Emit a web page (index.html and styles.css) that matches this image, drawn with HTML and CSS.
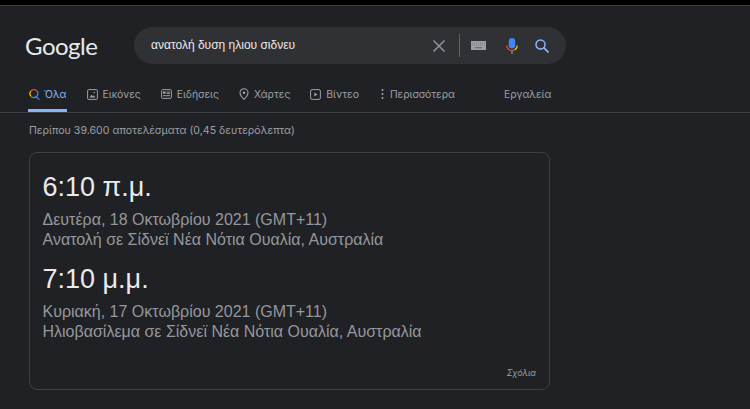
FILE: index.html
```html
<!DOCTYPE html>
<html lang="el">
<head>
<meta charset="utf-8">
<title>ανατολή δυση ηλιου σιδνευ</title>
<link rel="stylesheet" href="styles.css">
</head>
<body>
<div class="top-strip"></div>
<header class="header">
  <div class="logo">Google</div>
  <div class="search">
    <span class="query">ανατολή δυση ηλιου σιδνευ</span>
    <svg class="clear" width="14" height="14" viewBox="0 0 14 14"><path d="M1.500 1.500l11 11M12.500 1.500l-11 11" stroke="#8e9196" stroke-width="1.600" fill="none"/></svg>
    <span class="divider"></span>
    <svg class="kbd" width="15" height="9" viewBox="0 0 15 9"><rect width="15" height="9" fill="#9aa0a6"/><path d="M1 2h13M1 4h13" stroke="#6f7378" stroke-width=".7" stroke-dasharray="1 1"/><rect x="4" y="6" width="7" height="1.400" fill="#6f7378"/></svg>
    <svg class="mic" width="12" height="16" viewBox="0 0 12 16">
      <rect x="2.800" y="0" width="6.400" height="10.500" rx="3.200" fill="#4285f4"/>
      <path d="M.7 7.600a5.300 5.300 0 0 0 2.800 4.300" stroke="#ea4335" stroke-width="1.400" fill="none"/>
      <path d="M11.300 7.600a5.300 5.300 0 0 1-2.800 4.300" stroke="#fbbc05" stroke-width="1.400" fill="none"/>
      <path d="M3.500 11.900a5.300 5.300 0 0 0 5 0" stroke="#ea4335" stroke-width="1.400" fill="none"/>
      <rect x="5.200" y="12.500" width="1.600" height="3.500" fill="#34a853"/>
    </svg>
    <svg class="lens" width="14" height="14" viewBox="0 0 14 14"><circle cx="5.500" cy="5.500" r="4.500" stroke="#8ab4f8" stroke-width="1.500" fill="none"/><path d="M8.700 8.700L13.500 13.500" stroke="#8ab4f8" stroke-width="1.700"/></svg>
  </div>
</header>
<nav class="tabs">
  <a class="tab tab-active">
    <svg width="11" height="11" viewBox="0 0 12 12"><path d="M8.200 1.600A4.400 4.400 0 0 0 2 2.400" stroke="#ea4335" stroke-width="1.400" fill="none"/><path d="M2 2.400a4.400 4.400 0 0 0 .2 5.600" stroke="#fbbc05" stroke-width="1.400" fill="none"/><path d="M2.200 8a4.400 4.400 0 0 0 5.600 .6" stroke="#34a853" stroke-width="1.400" fill="none"/><path d="M8.200 1.600a4.400 4.400 0 0 1-.4 7L11.400 11.600" stroke="#4285f4" stroke-width="1.400" fill="none"/></svg>
    <span>Όλα</span>
  </a>
  <a class="tab">
    <svg width="11" height="11" viewBox="0 0 11 11"><rect x=".6" y=".6" width="9.800" height="9.800" rx="1" stroke="#9aa0a6" fill="none"/><path d="M2.400 8.400l2-2.600 1.400 1.500 1-1 1.600 2.100z" fill="#9aa0a6"/><circle cx="7.300" cy="3.500" r=".8" fill="#9aa0a6"/></svg>
    <span>Εικόνες</span>
  </a>
  <a class="tab">
    <svg width="11" height="10" viewBox="0 0 11 10"><rect x=".6" y=".6" width="9.800" height="8.800" rx="1" stroke="#9aa0a6" fill="none"/><rect x="2" y="2.400" width="2.600" height="2.400" fill="#9aa0a6"/><path d="M5.600 3h3.400M5.600 4.600h3.400M2 6.700h7" stroke="#9aa0a6"/></svg>
    <span>Ειδήσεις</span>
  </a>
  <a class="tab">
    <svg width="10" height="12" viewBox="0 0 10 12"><path d="M5 .7a4 4 0 0 0-4 4c0 2.800 4 6.600 4 6.600s4-3.800 4-6.600a4 4 0 0 0-4-4z" stroke="#9aa0a6" stroke-width="1.100" fill="none"/><circle cx="5" cy="4.700" r="1.300" fill="#9aa0a6"/></svg>
    <span>Χάρτες</span>
  </a>
  <a class="tab">
    <svg width="11" height="11" viewBox="0 0 11 11"><rect x=".6" y=".6" width="9.800" height="9.800" rx="1.500" stroke="#9aa0a6" fill="none"/><path d="M4.300 3.400v4.200l3.200-2.100z" fill="#9aa0a6"/></svg>
    <span>Βίντεο</span>
  </a>
  <a class="tab tab-more">
    <svg width="3" height="10" viewBox="0 0 3 10"><path d="M1.500 0v2M1.500 4v2M1.500 8v2" stroke="#9aa0a6" stroke-width="1.600"/></svg>
    <span>Περισσότερα</span>
  </a>
  <a class="tab tab-tools"><span>Εργαλεία</span></a>
</nav>
<main class="main">
  <p class="stats">Περίπου 39.600 αποτελέσματα (0,45 δευτερόλεπτα)</p>
  <section class="card">
    <div class="entry">
      <div class="time">6:10 π.μ.</div>
      <div class="detail">Δευτέρα, 18 Οκτωβρίου 2021 (GMT+11)</div>
      <div class="detail">Ανατολή σε Σίδνεϊ Νέα Νότια Ουαλία, Αυστραλία</div>
    </div>
    <div class="entry">
      <div class="time">7:10 μ.μ.</div>
      <div class="detail">Κυριακή, 17 Οκτωβρίου 2021 (GMT+11)</div>
      <div class="detail">Ηλιοβασίλεμα σε Σίδνεϊ Νέα Νότια Ουαλία, Αυστραλία</div>
    </div>
    <div class="feedback">Σχόλια</div>
  </section>
</main>
</body>
</html>
```
FILE: styles.css
```css
* { box-sizing: border-box; }
html, body { margin: 0; height: 100%; }
body {
  background: #202124;
  font-family: "Liberation Sans", Arial, sans-serif;
  color: #bdc1c6;
  overflow: hidden;
}
.top-strip {
  height: 6px;
  background: #000;
  border-bottom: 1px solid #3c4043;
}
.header {
  display: flex;
  align-items: center;
  height: 37px;
  margin-top: 21px;
  padding-left: 25px;
}
.logo {
  width: 109px;
  font-family: "Lato", sans-serif;
  font-size: 24px;
  line-height: 37px;
  letter-spacing: -0.5px;
  color: #e8eaed;
}
.search {
  display: flex;
  align-items: center;
  width: 432px;
  height: 37px;
  padding-left: 17px;
  border-radius: 19px;
  background: #303134;
}
.query {
  flex: 1;
  padding-bottom: 2px;
  font-size: 12px;
  color: #e8eaed;
}
.clear { margin-right: 13px; }
.divider {
  width: 1px;
  height: 23px;
  margin-right: 11px;
  background: #5f6368;
}
.kbd { margin-right: 20px; }
.mic { margin-right: 17px; }
.lens { margin-right: 17px; }
.tabs {
  display: flex;
  align-items: stretch;
  height: 49px;
  padding: 0 0 0 28px;
  border-bottom: 1px solid #3c4043;
}
.tab {
  display: flex;
  align-items: center;
  gap: 5px;
  height: 48px;
  padding-top: 12px;
  margin-right: 20px;
  font-family: "Inter", "Noto Sans", sans-serif;
  font-size: 10.400px;
  color: #9aa0a6;
}
.tab-active {
  gap: 4px;
  color: #8ab4f8;
  border-bottom: 3px solid #8ab4f8;
  padding-top: 15px;
  padding-left: 1px;
}
.tab-more { gap: 6px; margin-left: 2px; margin-right: 49px; }
.tab-tools { margin-right: 0; }
.main { padding: 0 0 0 29px; }
.stats {
  margin: 10px 0 0;
  font-family: "Inter", "Noto Sans", sans-serif;
  font-size: 10.600px;
  line-height: 16px;
  color: #9aa0a6;
}
.card {
  display: flex;
  flex-direction: column;
  width: 521px;
  height: 238px;
  margin-top: 13px;
  padding: 18px 13px 0 12.500px;
  border: 1px solid #3c4043;
  border-radius: 8px;
}
.entry { margin-bottom: 13px; }
.time {
  font-size: 27px;
  line-height: 32px;
  color: #e8eaed;
}
.detail {
  font-size: 16px;
  line-height: 20px;
  color: #94989d;
}
.time + .detail { margin-top: 7px; }
.feedback {
  margin-top: auto;
  margin-bottom: 11px;
  text-align: right;
  font-family: "Inter", "Noto Sans", sans-serif;
  font-size: 8.500px;
  font-style: italic;
  color: #9aa0a6;
}
```
